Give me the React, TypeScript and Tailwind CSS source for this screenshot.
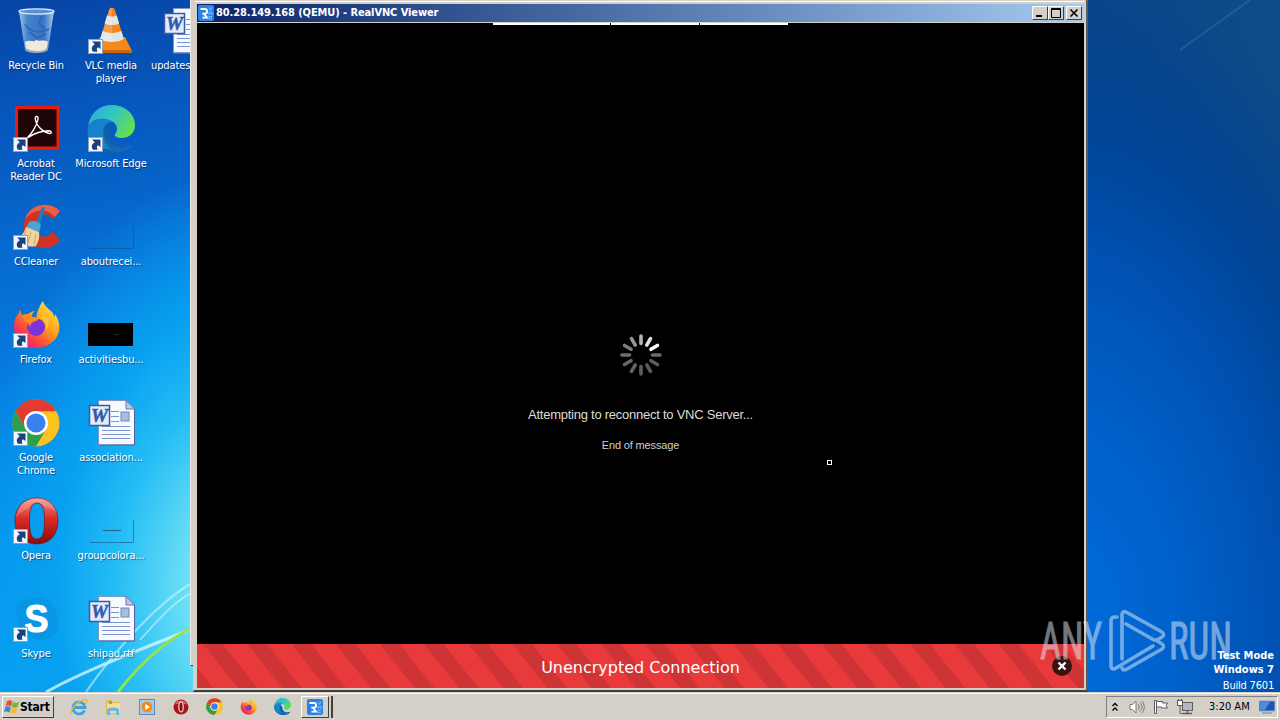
import { ReactNode } from "react";
import { clsx } from "clsx";

type DesktopItem = {
  label: string;
  icon: ReactNode;
  shortcut?: boolean;
  clipped?: boolean;
};

function ShortcutArrow() {
  return (
    <svg viewBox="0 0 15 15" className="absolute left-px top-8 size-[15px]">
      <rect x="0.5" y="0.5" width="14" height="14" fill="#f4f8fc" stroke="#8fa3b8" />
      <path d="M4 2.500h8.500V10L10 8.200C8.600 9.200 8.500 10.500 9.500 12.800H5C2.800 9.500 3.800 7 6.800 5.200z" fill="#17427f" />
    </svg>
  );
}

function RecycleBinIcon() {
  return (
    <svg viewBox="0 0 48 48" className="size-12">
      <defs>
        <linearGradient id="bin" x1="0" x2="1">
          <stop offset="0" stopColor="#c2dcf2" stopOpacity="0.85" />
          <stop offset="0.25" stopColor="#5f9bdc" stopOpacity="0.7" />
          <stop offset="0.7" stopColor="#4d86cc" stopOpacity="0.7" />
          <stop offset="1" stopColor="#c6dcf0" stopOpacity="0.9" />
        </linearGradient>
      </defs>
      <path d="M7 4l6 39c1 4 22 4 23 0l6-39z" fill="url(#bin)" />
      <path d="M13 35c5-3 8 1 11-2 4 2 8-1 12 2l-1.500 8c-3 3-18 3-20.500 0z" fill="#f0e9dc" />
      <path d="M14 42c4 4 18 4 21 0" fill="none" stroke="#9baab8" strokeWidth="2" />
      <ellipse cx="24.500" cy="4.500" rx="17.500" ry="2.600" fill="#5a8fd0" stroke="#e0edf8" strokeWidth="1.400" />
      <path d="M13 17c4 8 14 10 24 5M30 9l-3 8 6 5M17 25l8 6 9-4" fill="none" stroke="#2461b4" strokeWidth="2" opacity="0.7" />
    </svg>
  );
}

function VlcIcon() {
  return (
    <svg viewBox="0 0 48 48" className="size-12">
      <path d="M13 30h25l7 14c0 2-1 2-2 2H9c-2 0-2-1-2-2z" fill="#f58a1a" />
      <path d="M7 43l38 0v2c0 1-1 1-2 1H9c-2 0-2-1-2-3z" fill="#cf6506" />
      <path d="M22 3c1-3 5-3 6 0l9 30c-3 5-21 5-24 0z" fill="#f8851c" />
      <path d="M20 8.500c3 1.500 7 1.500 9.700 0l2.400 8c-4 2-10.500 2-14.500 0z" fill="#dfe4e8" />
      <path d="M15.500 24c5 2.500 14 2.500 19 0l2.200 8c-5 4-18.500 4-23.500 0z" fill="#dfe4e8" />
      <path d="M22 3c1-3 3-3 3-2v34c-5 0-9-1-12-2z" fill="#fff" opacity="0.18" />
    </svg>
  );
}

function AcrobatIcon() {
  return (
    <svg viewBox="0 0 48 48" className="size-12">
      <rect x="4.500" y="2.500" width="41.500" height="40.500" fill="#1f0508" stroke="#ea1d0c" strokeWidth="3" />
      <path
        d="M14 34c6-5 11-14 12-20 .400-3.500-3.200-3.500-2.700 0 1 7 8 13.500 14 14.500 3 .300 2.500-2.700-.500-2.700-8 .200-15 3-20.500 6.500-3.500 3-3.500 3-2.300 1.700z"
        fill="none"
        stroke="#fff"
        strokeWidth="1.400"
      />
    </svg>
  );
}

function EdgeIcon({ className, id }: { className: string; id: string }) {
  return (
    <svg viewBox="0 0 48 48" className={className}>
      <defs>
        <linearGradient id={id} x1="0" y1="0.200" x2="1" y2="0.700">
          <stop offset="0" stopColor="#2aaee8" />
          <stop offset="0.500" stopColor="#35c9b8" />
          <stop offset="1" stopColor="#6cdf45" />
        </linearGradient>
      </defs>
      <path d="M1 21C-1 38 11 48 26 48c8 0 15-3 19-9-13 5-23-3-22-15L10 14z" fill="#0f5fae" />
      <path d="M17 24c-1 14 11 23 27 16 1.500-.700 1.500.500.700 1.500C38 49 21 50 15 38c-4-8-1-13 2-14z" fill="#1668b4" />
      <path d="M1 22C3 7 13 0 25 0c13 0 23 9 23 20 0 9-7 13-13 13-5 0-8-2-7-4 4-4 2-11-4-13C15 12 4 14 1 22z" fill={`url(#${id})`} />
      <path d="M1 22c4-9 17-11 24-5-6 0-9 5-9 11 0 6 2 11 7 16C9 45-2 35 1 22z" fill="#1682cb" />
    </svg>
  );
}

function CCleanerIcon() {
  return (
    <svg viewBox="0 0 48 48" className="size-12">
      <path d="M48 8C37-3 18 1 13 16c-5 15 4 29 18 29 8 0 14-3 17-8l-8-9c-3 5-7 7-11 5-7-4-7-15 0-20 4-3 8-1 11 3z" fill="#cf3422" />
      <path d="M48 8C37-3 18 1 13 16c8-10 21-12 30-2z" fill="#e8604a" />
      <path d="M30 4l3 1-5 16-4-1z" fill="#237dbd" />
      <path d="M17 19c5-2 9-1 12 3l-2 7-13-4z" fill="#4ba5d8" />
      <path d="M14 24l13 5c1 6-1 10-3 14-7 2-14-1-20-7 5-2 8-6 10-12z" fill="#f1d3a0" />
      <path d="M14 28l-4 9M19 29l-3 11M24 31l-2 11" stroke="#cda468" strokeWidth="1" />
    </svg>
  );
}

function FirefoxIcon({ className, id }: { className: string; id: string }) {
  return (
    <svg viewBox="0 0 48 48" className={className}>
      <defs>
        <linearGradient id={id} x1="0.900" y1="0.100" x2="0.200" y2="0.900">
          <stop offset="0" stopColor="#ffe63d" />
          <stop offset="0.450" stopColor="#ff9a1f" />
          <stop offset="0.750" stopColor="#ff4a3e" />
          <stop offset="1" stopColor="#e8207c" />
        </linearGradient>
      </defs>
      <path d="M31 0c1 5 5 7 8 10 2 2 3 4 3 6 1-1 1-2 1-3 4 6 5 12 4 17-2 10-12 17-23 17C11 47 2 37 2 25c0-7 3-11 7-16 0 3 0 4 1 5 2-1 4-1 6-1 2-2 5-3 7-3-3 2-3 4-3 6l4 1c1-7 4-13 7-17z" fill={`url(#${id})`} />
      <circle cx="24" cy="26" r="9" fill="#7a35d8" />
      <path d="M11 15c6-2 9 2 15 1 2 0 1 3-2 4-4 1-6 3-6 6-1-2-2-3-2-5-2 0-5-3-5-6z" fill="#ff8a1c" />
      <path d="M25 18c6-1 11 4 9 11 5-6 3-13-3-15 0 2-3 3-6 4z" fill="#ffc52e" />
    </svg>
  );
}

function ChromeIcon({ className }: { className: string }) {
  return (
    <svg viewBox="0 0 48 48" className={className}>
      <circle cx="24" cy="24" r="23.500" fill="#fcc31e" />
      <path d="M3.600 12.200A23.500 23.500 0 0 1 44.400 12.200H24L13.800 30z" fill="#e33b2e" />
      <path d="M3.600 12.200A23.500 23.500 0 0 0 24 47.500L34.200 29.900 24 36l-10.200-6z" fill="#2f9e4a" />
      <circle cx="24" cy="24" r="12" fill="#fff" />
      <circle cx="24" cy="24" r="9.500" fill="#3c7fee" />
    </svg>
  );
}

function OperaIcon({ className, id }: { className: string; id: string }) {
  return (
    <svg viewBox="0 0 48 48" className={className}>
      <defs>
        <linearGradient id={id} x1="0" y1="0" x2="0" y2="1">
          <stop offset="0" stopColor="#f5928a" />
          <stop offset="0.450" stopColor="#dc2a25" />
          <stop offset="1" stopColor="#8a0a0c" />
        </linearGradient>
      </defs>
      <path
        d="M25 1C38 1 46 11 46 24S38 47 25 47 3 37 3 24 11 1 25 1zm0 5c-6 0-7.500 7-7.500 18s1.500 18 7.500 18 7.500-7 7.500-18-1.500-18-7.500-18z"
        fill={`url(#${id})`}
        stroke="#7e1010"
        strokeWidth="0.700"
      />
      <path d="M25 1c10 0 18 6 20 15-4-4-9-6-12-6-2-3-4-4-8-4s-7 1-8 5C12 13 7 16 4 20 6 9 14 1 25 1z" fill="#fff" opacity="0.180" />
    </svg>
  );
}

function SkypeIcon() {
  return (
    <svg viewBox="0 0 48 48" className="size-12">
      <path d="M14 4C24-1 40 3 44 17c6 9 2 25-9 27-12 3-29-3-30-20C3 15 5 6 14 4z" fill="#0a90da" opacity="0.500" />
      <text x="12.500" y="37" fill="#fff" stroke="#fff" fontFamily="Liberation Sans, sans-serif" fontWeight="bold" fontSize="38" textLength="24" lengthAdjust="spacingAndGlyphs">
        S
      </text>
    </svg>
  );
}

function WordIcon() {
  return (
    <svg viewBox="0 0 48 48" className="size-12">
      <path d="M11.500 1.500h28l8 8V46h-36z" fill="#f6f9ff" stroke="#7f96c4" />
      <path d="M47.500 9.500V46h-36" fill="none" stroke="#4c5f9e" />
      <path d="M39 1.500v8.500h8.500z" fill="#b9cbea" stroke="#5c78b0" />
      <path d="M24 12.500h8M24 17.500h8M24 22.500h8M15 27.500h28M15 31.500h28M15 35.500h28M15 39.500h28" stroke="#7d95cf" />
      <rect x="34" y="13" width="8" height="9" fill="#a9bde0" stroke="#7388b4" />
      <rect x="2.500" y="6.500" width="20" height="20" fill="#e4ecfa" stroke="#3f5aa4" strokeWidth="1.500" />
      <text x="4" y="22.500" fill="#3358ae" stroke="#3358ae" strokeWidth="0.500" fontFamily="Liberation Serif, serif" fontWeight="bold" fontStyle="italic" fontSize="18" textLength="17" lengthAdjust="spacingAndGlyphs">
        W
      </text>
    </svg>
  );
}

// image thumbnails that are nearly the colour of the wallpaper
function FaintThumb({ dash }: { dash?: boolean }) {
  return (
    <svg viewBox="0 0 48 48" className="size-12">
      <path d="M3 45.500H46.500V23" fill="none" stroke="#0b4f8a" strokeOpacity="0.550" />
      {dash && <path d="M16 33.500h18" stroke="#1f6d8c" strokeWidth="1.200" />}
    </svg>
  );
}

function BlackThumb() {
  return (
    <svg viewBox="0 0 48 48" className="size-12">
      <path d="M1 22h45v23H1z" fill="#000" />
      <path d="M27 33.500h5" stroke="#2a2a2a" />
    </svg>
  );
}

const COLUMNS: DesktopItem[][] = [
  [
    { label: "Recycle Bin", icon: <RecycleBinIcon /> },
    { label: "Acrobat\nReader DC", icon: <AcrobatIcon />, shortcut: true },
    { label: "CCleaner", icon: <CCleanerIcon />, shortcut: true },
    { label: "Firefox", icon: <FirefoxIcon className="size-12" id="ff-desk" />, shortcut: true },
    { label: "Google\nChrome", icon: <ChromeIcon className="size-12" />, shortcut: true },
    { label: "Opera", icon: <OperaIcon className="size-12" id="op-desk" />, shortcut: true },
    { label: "Skype", icon: <SkypeIcon />, shortcut: true },
  ],
  [
    { label: "VLC media\nplayer", icon: <VlcIcon />, shortcut: true },
    { label: "Microsoft Edge", icon: <EdgeIcon className="size-12" id="edge-desk" />, shortcut: true },
    { label: "aboutrecei...", icon: <FaintThumb /> },
    { label: "activitiesbu...", icon: <BlackThumb /> },
    { label: "association...", icon: <WordIcon /> },
    { label: "groupcolora...", icon: <FaintThumb dash /> },
    { label: "shipau.rtf", icon: <WordIcon /> },
  ],
  [{ label: "updates", icon: <WordIcon />, clipped: true }],
];

function DesktopIcon({ item }: { item: DesktopItem }) {
  return (
    <div className="flex h-[98px] w-[75px] flex-col items-center pt-[7px]">
      <div className="relative size-12">
        {item.icon}
        {item.shortcut && <ShortcutArrow />}
      </div>
      <span
        className={clsx(
          "mt-1 w-[75px] whitespace-pre text-[11px] leading-[13px] tracking-[-0.12px] text-white [text-shadow:1px_1px_1px_rgba(0,30,80,0.6)]",
          item.clipped ? "pl-[3px] text-left" : "pl-px text-center"
        )}
      >
        {item.label}
      </span>
    </div>
  );
}

function Wallpaper() {
  return (
    <div className="absolute inset-0 bg-[#0056b8]">
      <div className="absolute inset-y-0 left-0 w-[640px] bg-[radial-gradient(ellipse_240px_340px_at_260px_590px,#9df3f4_0%,#6ee0f6_30%,#25bdf5_60%,#08a0f0_85%,transparent_125%),linear-gradient(170deg,#0645a6_0%,#0658be_16%,#0676da_42%,#0592ec_65%,#05a8f8_100%)]" />
      <div className="absolute inset-y-0 right-0 w-[640px] bg-[radial-gradient(ellipse_330px_580px_at_420px_640px,#006cdc_0%,#0062cc_35%,#0052b4_65%,#004494_90%,transparent_115%),linear-gradient(250deg,#0f4c88_0%,#053f86_40%,#054092_100%)]" />
      <svg viewBox="0 0 1280 692" className="absolute inset-0 h-full w-full" fill="none">
        <path d="M46 692C90 668 140 650 194 628" stroke="#d8fbff" strokeWidth="3" opacity="0.750" />
        <path d="M86 692C115 650 160 600 194 582" stroke="#c8f8ff" strokeWidth="2" opacity="0.600" />
        <path d="M140 640C160 618 175 600 194 592" stroke="#e0fcff" strokeWidth="1.500" opacity="0.600" />
        <path d="M118 692C140 664 165 640 194 627" stroke="#93e34e" strokeWidth="3" />
        <path d="M1180 50L1250 0" stroke="#3c78b8" strokeWidth="2" opacity="0.400" />
      </svg>
    </div>
  );
}

function VncLogo({ className }: { className: string }) {
  return (
    <svg viewBox="0 0 16 16" className={className}>
      <rect width="16" height="16" rx="2" fill="#2b82e6" />
      <path d="M2.500 4h4.300a2.200 2.200 0 0 1 0 4.600H4.200M6 8.600l3 4H4.500" fill="none" stroke="#fff" strokeWidth="1.800" />
      <path d="M11 2.500l1.500 3 1.500-3M11 10V6.800l3 3V6.500M14 11.500h-3v2.300h3" fill="none" stroke="#8fc2fa" strokeWidth="0.900" />
    </svg>
  );
}

const raised = "border border-t-white border-l-white border-b-[#404040] border-r-[#404040] bg-[#d4d0c8]";

function TitleButton({ children, className }: { children: ReactNode; className?: string }) {
  return (
    <button type="button" className={clsx("flex h-[14px] w-4 items-center justify-center", raised, className)}>
      <svg viewBox="0 0 14 12" className="h-3 w-[14px]" fill="none" stroke="#000">
        {children}
      </svg>
    </button>
  );
}

const SPOKES = ["#b4b4b4", "#e0e0e0", "#ffffff", "#6a6a6a", "#5c5c5c", "#5c5c5c", "#5e5e5e", "#626262", "#666666", "#6c6c6c", "#7c7c7c", "#969696"];

function Spinner() {
  return (
    <svg viewBox="-22 -22 44 44" className="size-11">
      {SPOKES.map((color, i) => (
        <path key={i} d="M0 -11.500V-19" stroke={color} strokeWidth="3.600" strokeLinecap="round" transform={`rotate(${i * 30})`} />
      ))}
    </svg>
  );
}

function ViewerWindow() {
  return (
    <div className="absolute left-[193px] top-0 flex h-[692px] w-[895px] flex-col border-b-2 border-l border-r-2 border-b-[#404040] border-l-[#d4d0c8] border-r-[#5a5a58] bg-[#d4d0c8] pb-[2px] pl-[3px] pr-[2px]">
      <div className="-ml-[2px] mb-[2px] mt-px h-px shrink-0 bg-white" />
      <div className="flex h-[18px] shrink-0 items-center bg-linear-to-r from-[#0a246a] to-[#a6caf0] pl-px pr-[2px]">
        <VncLogo className="size-4" />
        <span className="ml-[2px] text-[11px] font-bold leading-[14px] tracking-[-0.1px] text-white">80.28.149.168 (QEMU) - RealVNC Viewer</span>
        <div className="ml-auto flex">
          <TitleButton>
            <path d="M3 9h6" strokeWidth="2" />
          </TitleButton>
          <TitleButton>
            <path d="M2.500 1.500h9v9h-9zM2 2.500h10" />
          </TitleButton>
          <TitleButton className="ml-[2px]">
            <path d="M3.500 2.500l7 7M10.500 2.500l-7 7" strokeWidth="1.600" />
          </TitleButton>
        </div>
      </div>
      <div className="mt-px flex min-h-0 flex-1 flex-col bg-black">
        <div className="mx-auto flex h-[2px] w-[295px] shrink-0 gap-px">
          <div className="w-[117px] bg-white" />
          <div className="w-[88px] bg-white" />
          <div className="flex-1 bg-white" />
        </div>
        <div className="relative flex flex-1 flex-col items-center pt-[308px] font-['Liberation_Sans',sans-serif]">
          <Spinner />
          <p className="mt-[30px] text-[13px] leading-4 tracking-[-0.25px] text-[#dcdcdc]">Attempting to reconnect to VNC Server...</p>
          <p className="mt-[15px] text-[11px] leading-[14px] tracking-[-0.15px] text-[#cfcfcf]">End of message</p>
          {/* remote cursor */}
          <div className="absolute left-[630px] top-[435px] size-[5px] border border-white" />
        </div>
        <div className="relative flex h-11 shrink-0 items-center justify-center bg-[repeating-linear-gradient(51.5deg,#ce3335_0px,#ce3335_12.4px,#e8393b_13.2px,#e8393b_31.8px,#ce3335_32.5px,#ce3335_34.6px)]">
          <span className="mt-[3px] font-['DejaVu_Sans',sans-serif] text-[16px] leading-5 text-white [font-stretch:normal]">Unencrypted Connection</span>
          <button type="button" className="absolute right-[12px] top-[12px] size-5 rounded-full bg-[#3a1214]">
            <svg viewBox="0 0 20 20" className="size-5" stroke="#fff" strokeWidth="2.400">
              <path d="M6.500 6.500l7 7M13.500 6.500l-7 7" />
            </svg>
          </button>
        </div>
      </div>
    </div>
  );
}

function Watermark() {
  return (
    <svg viewBox="0 0 200 70" className="absolute left-[1036px] top-[606px] h-[70px] w-[200px]" opacity="0.500" fill="none" stroke="#e6eef8">
      <g fill="#e6eef8" strokeWidth="0.900" fontFamily="Roboto, sans-serif" fontWeight="400" fontSize="51">
        <text x="4" y="53" textLength="62" lengthAdjust="spacingAndGlyphs">ANY</text>
        <text x="133" y="53" textLength="63" lengthAdjust="spacingAndGlyphs">RUN</text>
      </g>
      <g strokeWidth="3.600" strokeLinejoin="round" strokeLinecap="round">
        <path d="M81 11h-2c-3 0-4 1-4 4v44c0 4 2 5 5 3l37-22" />
        <path d="M86 53V9c0-3 2-4 4-3l36 20c2 1 2 4 0 5l-5 3" />
        <path d="M90 18l28 16" />
        <path d="M86 62c1 3 3 2 5 1l35-20c2-2 2-4 0-5l-6-4" />
      </g>
    </svg>
  );
}

function StartFlag() {
  return (
    <svg viewBox="0 0 16 16" className="size-4">
      <path d="M3 2c2-1 4-1 5.500.500L7 7.500C5.500 6.200 3.500 6.200 1.500 7z" fill="#e4572a" />
      <path d="M9.200 3c2 1 4 1 6 0L13.500 8c-2 1-4 .800-5.800-.300z" fill="#76b63c" />
      <path d="M1.300 8C3.300 7 5.300 7.200 6.800 8.400L5.300 13.500C3.800 12.300 2 12.300 0 13z" fill="#3b84d6" />
      <path d="M7.500 8.800c2 1 4 1 5.800.200l-1.500 5c-2 1-4 .700-5.800-.300z" fill="#f3bd2c" />
    </svg>
  );
}

function IeIcon() {
  return (
    <svg viewBox="0 0 18 18" className="size-[18px]" fill="none">
      <path d="M14.500 12.500A6 6 0 1 1 15 9.500H4" stroke="#3ba3e6" strokeWidth="2.800" />
      <path d="M1.500 16C-1 12 9 1.500 15.500 1.500c2.500.500 1 4-.500 6" stroke="#edba2d" strokeWidth="1.300" />
    </svg>
  );
}

function ExplorerIcon() {
  return (
    <svg viewBox="0 0 18 18" className="size-[18px]">
      <path d="M2 2h6l1 2h7v12H2z" fill="#e3bd55" />
      <path d="M3 5h13v10H3z" fill="#f5df8c" />
      <path d="M5 3h3v3H5z" fill="#79b558" />
      <path d="M3 17v-5c0-3.500 12-3.500 12 0v5h-3v-4H6v4z" fill="#6db6e6" />
    </svg>
  );
}

function MediaIcon() {
  return (
    <svg viewBox="0 0 16 16" className="size-4">
      <rect x="0.500" y="0.500" width="15" height="15" fill="#a5cbec" stroke="#5290c6" />
      <circle cx="8" cy="8" r="5.500" fill="#f58a1c" />
      <path d="M6.300 5v6l4.700-3z" fill="#fff" />
    </svg>
  );
}

// simplified ball for the quick launch size
function OperaSmallIcon() {
  return (
    <svg viewBox="0 0 16 16" className="size-4">
      <circle cx="8" cy="8" r="7.500" fill="#a8141a" />
      <path d="M1.500 6a7 7 0 0 1 13 0c-3-2-10-2-13 0z" fill="#e0605c" />
      <ellipse cx="8" cy="8" rx="2.200" ry="5" fill="#8c0c12" stroke="#f2dede" strokeWidth="1.200" />
    </svg>
  );
}

function Taskbar() {
  return (
    <div className="relative flex h-7 items-center border-t border-[#d4d0c8] bg-[#d4d0c8] shadow-[inset_0_1px_0_#fff]">
      <button type="button" className={clsx("ml-[2px] mt-px flex h-[22px] w-[52px] items-center pl-px", raised)}>
        <StartFlag />
        <span className="text-[12px] font-bold leading-4 tracking-[-0.2px] text-black">Start</span>
      </button>
      <div className="ml-4 flex items-center gap-4">
        <IeIcon />
        <ExplorerIcon />
      </div>
      <div className="ml-[17px] flex items-center gap-[18px]">
        <MediaIcon />
        <OperaSmallIcon />
      </div>
      <div className="ml-[17px] flex items-center gap-[17px]">
        <ChromeIcon className="size-[17px]" />
        <FirefoxIcon className="size-[17px]" id="ff-task" />
        <EdgeIcon className="size-[17px]" id="edge-task" />
      </div>
      <div className={clsx("ml-[10px] mt-px flex h-[22px] w-[28px] items-center justify-center", raised)}>
        <VncLogo className="size-4" />
      </div>
      <div className="mt-px h-[22px] w-[4px] border-r-2 border-r-[#404040]" />
      <div className="ml-auto mr-[2px] mt-px flex h-[22px] w-[172px] items-center border border-b-white border-l-[#808080] border-r-white border-t-[#808080] pl-1">
        <svg viewBox="0 0 8 10" className="h-[10px] w-2" fill="none" stroke="#000" strokeWidth="1.300">
          <path d="M1.500 4L4 1.500 6.500 4M1.500 8.500L4 6l2.500 2.500" />
        </svg>
        <svg viewBox="0 0 16 16" className="ml-[10px] size-4" fill="none" stroke="#77787a">
          <path d="M1 5.500h2.500L7 2v12l-3.500-3.500H1z" fill="#fff" />
          <path d="M9 5c1.500 1.500 1.500 4.500 0 6M11 3.500c2.500 2.500 2.500 6.500 0 9M13 2c3 3.500 3 8.500 0 12" />
        </svg>
        <svg viewBox="0 0 16 16" className="ml-[8px] size-4" stroke="#5c5d60" fill="#fff">
          <path d="M3.500 2.500h6v1.500h5L13 6.500 14.500 9H8.500V8h-5z" />
          <path d="M1.500 1.500h2v13h-2z" />
        </svg>
        <svg viewBox="0 0 16 16" className="ml-[8px] size-4" stroke="#5c5d60" fill="none">
          <rect x="5.500" y="3.500" width="10" height="8" fill="#b4b8bc" />
          <path d="M6 14.500h9M10.500 12v2" strokeWidth="1.500" />
          <rect x="0.500" y="1.500" width="5" height="5" fill="#fff" />
          <path d="M1.500 2V0M4.500 2V0M3 7v7.500h3" />
        </svg>
        <span className="ml-[16px] whitespace-nowrap text-[11px] leading-4 text-black">3:20 AM</span>
        <svg viewBox="0 0 16 14" className="ml-auto mr-[2px] h-[14px] w-4">
          <rect y="1" width="16" height="10" fill="#1b55b8" stroke="#8ea8ca" />
          <path d="M1 2h10L6 10H1z" fill="#4c8ce0" />
          <path d="M3 13h10" stroke="#6f8296" />
        </svg>
      </div>
    </div>
  );
}

export default function App() {
  return (
    <div className="relative flex h-[720px] w-[1280px] flex-col overflow-hidden font-['DejaVu_Sans_Condensed','DejaVu_Sans',sans-serif] [font-stretch:condensed]">
      <div className="relative h-[692px] overflow-hidden">
        <Wallpaper />
        <div className="relative -ml-[2px] flex">
          {COLUMNS.map((items, i) => (
            <div key={i} className="flex flex-col">
              {items.map((item) => (
                <DesktopIcon key={item.label} item={item} />
              ))}
            </div>
          ))}
        </div>
        {/* edge of a window sitting behind the viewer */}
        <div className="absolute left-[190px] top-0 h-[666px] w-[3px] border-b border-l border-b-[#404040] border-l-[#eceae6] bg-[#d4d0c8]" />
        <ViewerWindow />
        <Watermark />
        <div className="absolute right-[6px] top-[649px] flex flex-col items-end text-[11px] leading-[14px] text-white">
          <span className="font-bold">Test Mode</span>
          <span className="font-bold">Windows 7</span>
          <span className="mt-[2px] tracking-[-0.2px]">Build 7601</span>
        </div>
      </div>
      <Taskbar />
    </div>
  );
}
